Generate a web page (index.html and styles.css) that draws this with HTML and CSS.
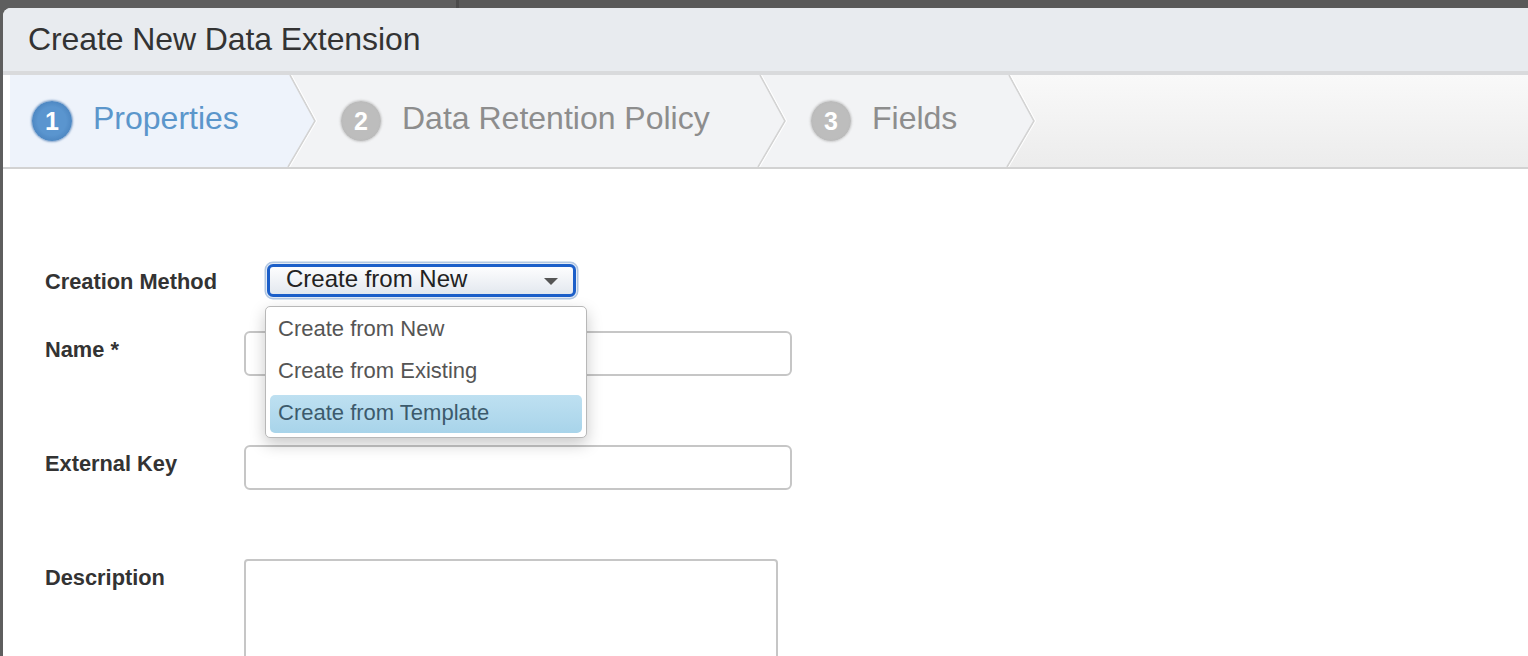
FILE: index.html
```html
<!DOCTYPE html>
<html lang="en">
<head>
<meta charset="utf-8">
<title>Create New Data Extension</title>
<link rel="stylesheet" href="styles.css">
</head>
<body>
<div class="modal">
  <div class="modal-header">
    <h1 class="modal-title">Create New Data Extension</h1>
  </div>
  <div class="wizard">
    <div class="step step-active step-1"><span class="step-num">1</span><span class="step-label">Properties</span></div>
    <svg class="chev" width="30" height="92" viewBox="0 0 30 92" preserveAspectRatio="none">
      <polygon points="0,0 3,0 28,46 1,92 0,92" fill="#eef3fb"/>
      <polygon points="3,0 30,0 30,92 1,92 28,46" fill="#f2f3f5"/>
      <polyline points="3,0 28,46 1,92" fill="none" stroke="#d3d3d3" stroke-width="1.6"/>
      <polyline points="4.6,0 29.6,46 2.6,92" fill="none" stroke="#ffffff" stroke-width="1"/>
    </svg>
    <div class="step step-2"><span class="step-num">2</span><span class="step-label">Data Retention Policy</span></div>
    <svg class="chev" width="30" height="92" viewBox="0 0 30 92" preserveAspectRatio="none">
      <polygon points="0,0 3,0 28,46 1,92 0,92" fill="#f2f3f5"/>
      <polygon points="3,0 30,0 30,92 1,92 28,46" fill="#f2f3f5"/>
      <polyline points="3,0 28,46 1,92" fill="none" stroke="#d3d3d3" stroke-width="1.6"/>
      <polyline points="4.6,0 29.6,46 2.6,92" fill="none" stroke="#ffffff" stroke-width="1"/>
    </svg>
    <div class="step step-3"><span class="step-num">3</span><span class="step-label">Fields</span></div>
    <svg class="chev" width="30" height="92" viewBox="0 0 30 92" preserveAspectRatio="none">
      <defs>
        <linearGradient id="restg" x1="0" y1="0" x2="0" y2="1">
          <stop offset="0" stop-color="#f9f9f9"/>
          <stop offset="1" stop-color="#ececec"/>
        </linearGradient>
      </defs>
      <polygon points="0,0 3,0 28,46 1,92 0,92" fill="#f2f3f5"/>
      <polygon points="3,0 30,0 30,92 1,92 28,46" fill="url(#restg)"/>
      <polyline points="3,0 28,46 1,92" fill="none" stroke="#d3d3d3" stroke-width="1.6"/>
      <polyline points="4.6,0 29.6,46 2.6,92" fill="none" stroke="#ffffff" stroke-width="1"/>
    </svg>
    <div class="wizard-rest"></div>
  </div>

  <form class="form">
    <div class="row row-method">
      <label class="label">Creation Method</label>
      <div class="select-wrap">
        <div class="select"><span class="select-text">Create from New</span><span class="caret"></span></div>
        <ul class="menu">
          <li class="menu-item">Create from New</li>
          <li class="menu-item">Create from Existing</li>
          <li class="menu-item menu-item-hl">Create from Template</li>
        </ul>
      </div>
    </div>
    <div class="row row-field">
      <label class="label">Name *</label>
      <div class="input"></div>
    </div>
    <div class="row row-field">
      <label class="label">External Key</label>
      <div class="input"></div>
    </div>
    <div class="row row-field">
      <label class="label">Description</label>
      <div class="textarea"></div>
    </div>
  </form>
</div>
</body>
</html>
```

FILE: styles.css
```css
html, body {
  margin: 0;
  height: 100%;
  overflow: hidden;
}
body {
  background: linear-gradient(to right, #5e5e5e 0, #5e5e5e 456px, #4b4b4b 456px, #4b4b4b 459px, #595959 459px);
  padding: 8px 0 0 3px;
  box-sizing: border-box;
  font-family: "Liberation Sans", Arial, sans-serif;
}
.modal {
  background: #ffffff;
  height: 100%;
  border-top-left-radius: 8px;
  overflow: hidden;
}
.modal-header {
  height: 63px;
  background: #e8ebef;
  border-bottom: 4px solid #d9dadc;
  display: flex;
  align-items: center;
  padding-left: 25px;
}
.modal-title {
  margin: 0;
  font-weight: normal;
  font-size: 32px;
  color: #333333;
  letter-spacing: -0.1px;
}
.wizard {
  height: 92px;
  display: flex;
  padding-left: 7px;
  background: #ffffff;
  border-bottom: 2px solid #d2d2d2;
}
.step {
  display: flex;
  align-items: center;
  background: #f2f3f5;
  box-sizing: border-box;
  padding-left: 24px;
  flex: none;
}
.step-1 { width: 277px; padding-left: 22px; background: #eef3fb; }
.step-2 { width: 440px; }
.step-3 { width: 219px; }
.chev { flex: none; display: block; }
.wizard-rest {
  flex: 1;
  background: linear-gradient(#f9f9f9, #ececec);
}
.step-num {
  width: 40px;
  height: 40px;
  border-radius: 50%;
  display: flex;
  align-items: center;
  justify-content: center;
  color: #ffffff;
  font-weight: bold;
  font-size: 25px;
  background: radial-gradient(circle, #bdbdbd 60%, #b3b3b3 100%);
  box-shadow: 0 0 2px 1px rgba(190, 190, 190, 0.7);
  margin-right: 21px;
}
.step-active .step-num {
  background: radial-gradient(circle, #5a95cf 50%, #3c74b0 100%);
  box-shadow: 0 0 2px 1px rgba(60, 110, 170, 0.6);
}
.step-label {
  font-size: 32px;
  color: #8d8d8d;
  margin-bottom: 5px;
}
.step-active .step-label { color: #5b96cb; }

.form {
  margin: 0;
  padding: 95px 0 0 42px;
}
.row {
  display: flex;
  align-items: flex-start;
}
.label {
  flex: 0 0 199px;
  font-weight: bold;
  font-size: 21.8px;
  line-height: 26px;
  color: #333333;
  padding-top: 6px;
}
.row-method { margin-bottom: 34px; }
.row-method .label { padding-top: 5px; }
.row-field { margin-bottom: 69px; }

.select-wrap {
  position: relative;
  margin-left: 23px;
}
.select {
  width: 309px;
  height: 33px;
  box-sizing: border-box;
  border: 3px solid #1c5fc9;
  border-radius: 6px;
  background: linear-gradient(#fdfdfe, #e3e8ef);
  box-shadow: 0 0 0 1px #e3ebf5, 0 0 0 2.5px #b2c7e2;
  display: flex;
  align-items: center;
  padding: 0 15px 0 16px;
}
.select-text {
  font-size: 24px;
  color: #222222;
  margin-bottom: 3px;
}
.caret {
  margin-left: auto;
  width: 0;
  height: 0;
  border-left: 7px solid transparent;
  border-right: 7px solid transparent;
  border-top: 7px solid #555555;
  margin-top: 2px;
}
.menu {
  position: absolute;
  top: 42px;
  left: -2px;
  width: 322px;
  box-sizing: border-box;
  margin: 0;
  padding: 4px;
  list-style: none;
  background: #ffffff;
  border: 1px solid #b8b8b8;
  border-radius: 5px;
  box-shadow: 0 6px 16px rgba(0, 0, 0, 0.22);
}
.menu-item {
  height: 38px;
  line-height: 36px;
  padding-left: 8px;
  font-size: 22px;
  color: #555555;
  border-radius: 5px;
}
.menu-item + .menu-item { margin-top: 4px; }
.menu-item-hl {
  background: linear-gradient(#bee0f1, #a8d4ea);
  color: #3c5a6c;
}
.input {
  width: 548px;
  height: 45px;
  box-sizing: border-box;
  border: 2px solid #c6c6c6;
  border-radius: 6px;
  background: #ffffff;
}
.textarea {
  width: 534px;
  height: 140px;
  box-sizing: border-box;
  border: 2px solid #c6c6c6;
  border-radius: 4px;
  background: #ffffff;
}
```
